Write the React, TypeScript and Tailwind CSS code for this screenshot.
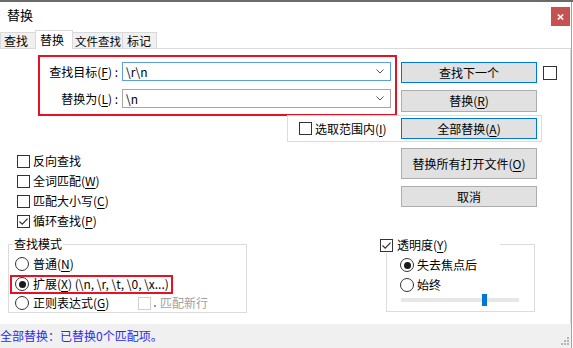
import React from "react";

const U = ({ c }: { c: string }) => (
  <span className="underline underline-offset-[2px] decoration-1">{c}</span>
);

function Check({ checked = false, disabled = false, big = false }: { checked?: boolean; disabled?: boolean; big?: boolean }) {
  return (
    <span
      className={`inline-flex items-center justify-center shrink-0 border bg-white ${big ? "w-[14px] h-[14px]" : "w-[13px] h-[13px]"} ${disabled ? "border-[#cfcfcf]" : "border-[#333333]"}`}
    >
      {checked && (
        <svg width="11" height="11" viewBox="0 0 11 11">
          <path d="M1.5 5.5 L4.2 8.2 L9.6 2.6" fill="none" stroke="#2a2a2a" strokeWidth="1.1" />
        </svg>
      )}
    </span>
  );
}

function Radio({ checked = false }: { checked?: boolean }) {
  return (
    <span className="inline-flex items-center justify-center w-[14px] h-[14px] shrink-0 rounded-full border border-[#333333] bg-white">
      {checked && <span className="w-[7px] h-[7px] rounded-full bg-[#1a1a1a]" />}
    </span>
  );
}

function Chevron() {
  return (
    <svg width="8" height="5" viewBox="0 0 8 5" className="shrink-0">
      <path d="M0.5 0.5 L4 4 L7.5 0.5" fill="none" stroke="#555" strokeWidth="1" />
    </svg>
  );
}

function Btn({ children, focus = false, tall = false, mid = false }: { children: React.ReactNode; focus?: boolean; tall?: boolean; mid?: boolean }) {
  return (
    <div
      className={`w-[136px] flex items-center justify-center whitespace-nowrap bg-[#e1e1e1] border ${tall ? "h-[31px]" : mid ? "h-[22px]" : "h-[21px]"} ${focus ? "border-[#0078d7]" : "border-[#adadad]"}`}
    >
      {children}
    </div>
  );
}

export default function App() {
  return (
    <div className="w-[573px] h-[348px] bg-white flex flex-col overflow-hidden text-black text-[12px] leading-[16px] [font-family:'Noto_Sans_CJK_SC','Microsoft_YaHei',sans-serif]">
      <div className="h-[2px] shrink-0 bg-[#6b6b6b]" />
      <div className="flex flex-1 min-h-0">
        <div className="w-[571px] flex flex-col">
          {/* title */}
          <div className="h-[28px] shrink-0 flex items-start justify-between">
            <span className="pl-[7px] pt-[5px] text-[13px] leading-[16px]">替换</span>
            <div className="mt-[5px] mr-[1px] w-[19px] h-[19px] bg-[#c75050] flex items-center justify-center">
              <svg width="7" height="6" viewBox="0 0 7 6">
                <path d="M0.8 0.5 L6.2 5.5 M6.2 0.5 L0.8 5.5" stroke="#fff" strokeWidth="1.6" />
              </svg>
            </div>
          </div>
          {/* tabs */}
          <div className="h-[18px] shrink-0 flex items-end relative z-10 whitespace-nowrap">
            <div className="w-[35px] h-[16px] shrink-0 pl-[3px] bg-[#f0f0f0] border-l border-t border-[#d9d9d9]">查找</div>
            <div className="w-[38px] h-[19px] shrink-0 -mb-px pl-[4px] pt-[1px] bg-white border-l border-t border-r border-[#d9d9d9]">替换</div>
            <div className="w-[49px] h-[16px] shrink-0 pl-[2px] text-[11.5px] bg-[#f0f0f0] border-t border-[#d9d9d9] overflow-hidden">文件查找</div>
            <div className="w-[35px] h-[16px] shrink-0 pl-[4px] bg-[#f0f0f0] border-l border-t border-r border-[#d9d9d9]">标记</div>
          </div>
          {/* panel */}
          <div className="flex-1 border-t border-r border-[#d9d9d9] flex flex-col">
            {/* row 1 */}
            <div className="flex items-start">
              <div className="ml-[38px] mt-[6px] w-[359px] shrink-0 border-2 border-[#e81123] pt-[5px] pb-[6px] flex flex-col gap-[8px]">
                <div className="flex items-center">
                  <div className="w-[80px] shrink-0 pr-[2px] flex justify-end">
                    <span className="whitespace-nowrap shrink-0">
                      查找目标(<U c="F" />) :
                    </span>
                  </div>
                  <div className="ml-[2px] w-[269px] shrink-0 h-[19px] border border-[#5b9fdb] flex items-center justify-between pl-[3px] pr-[6px]">
                    <span>\r\n</span>
                    <Chevron />
                  </div>
                </div>
                <div className="flex items-center">
                  <div className="w-[80px] shrink-0 pr-[2px] flex justify-end">
                    <span className="whitespace-nowrap shrink-0">
                      替换为(<U c="L" />) :
                    </span>
                  </div>
                  <div className="ml-[2px] w-[269px] shrink-0 h-[19px] border border-[#a5a5a5] flex items-center justify-between pl-[3px] pr-[6px]">
                    <span>\n</span>
                    <Chevron />
                  </div>
                </div>
              </div>
              <div className="ml-[4px] mt-[13px] flex flex-col gap-[7px]">
                <Btn focus>查找下一个</Btn>
                <Btn mid>
                  替换(<U c="R" />)
                </Btn>
              </div>
              <div className="ml-[6px] mt-[17px]">
                <Check big />
              </div>
            </div>
            {/* row 2 */}
            <div className="-mt-px ml-[287px] w-[255px] h-[27px] border border-[#dcdcdc] flex items-center pl-[11px] pr-[4px]">
              <Check />
              <span className="ml-[3px] whitespace-nowrap">
                选取范围内(<U c="I" />)
              </span>
              <div className="ml-auto">
                <Btn focus>
                  全部替换(<U c="A" />)
                </Btn>
              </div>
            </div>
            {/* row 3 */}
            <div className="mt-[6px] flex items-start">
              <div className="ml-[17px] pt-[3px] flex flex-col whitespace-nowrap">
                <div className="h-[20px] flex items-center gap-[3px]">
                  <Check />
                  <span>反向查找</span>
                </div>
                <div className="h-[20px] flex items-center gap-[3px]">
                  <Check />
                  <span>
                    全词匹配(<U c="W" />)
                  </span>
                </div>
                <div className="h-[20px] flex items-center gap-[3px]">
                  <Check />
                  <span>
                    匹配大小写(<U c="C" />)
                  </span>
                </div>
                <div className="h-[20px] flex items-center gap-[3px]">
                  <Check checked />
                  <span>
                    循环查找(<U c="P" />)
                  </span>
                </div>
              </div>
              <div className="ml-auto mr-[33px] flex flex-col gap-[7px]">
                <Btn tall>
                  替换所有打开文件(<U c="O" />)
                </Btn>
                <Btn>取消</Btn>
              </div>
            </div>
            {/* row 4 */}
            <div className="mt-[5px] flex items-start whitespace-nowrap">
              <div className="ml-[8px] w-[239px] shrink-0 flex flex-col">
                <span className="relative z-10 self-start ml-[5px] px-[1px] h-[16px] bg-white">查找模式</span>
                <div className="-mt-[8px] border border-[#dcdcdc] pt-[9px] flex flex-col">
                  <div className="h-[20px] flex items-center pl-[6px] gap-[4px]">
                    <Radio />
                    <span>
                      普通(<U c="N" />)
                    </span>
                  </div>
                  <div className="h-[20px] flex items-center">
                    <div className="ml-px w-[163px] h-[19px] border-2 border-[#e81123] flex items-center pl-[3px] gap-[4px]">
                      <Radio checked />
                      <span>
                        扩展(<U c="X" />) (\n, \r, \t, \0, \x...)
                      </span>
                    </div>
                  </div>
                  <div className="h-[18px] flex items-center pl-[6px]">
                    <div className="w-[123px] shrink-0 flex items-center gap-[4px]">
                      <Radio />
                      <span>
                        正则表达式(<U c="G" />)
                      </span>
                    </div>
                    <Check disabled />
                    <span className="ml-[3px] mt-[6px] w-[2px] h-[2px] bg-[#9a9a9a]" />
                    <span className="ml-[4px] text-[#a0a0a0]">匹配新行</span>
                  </div>
                </div>
              </div>
              <div className="ml-[133px] mt-[1px] w-[155px] shrink-0 flex flex-col">
                <div className="relative z-10 self-start w-[120px] h-[16px] bg-white flex items-center gap-[4px]">
                  <Check checked />
                  <span>
                    透明度(<U c="Y" />)
                  </span>
                </div>
                <div className="-mt-[9px] ml-[6px] w-[149px] border border-[#dcdcdc] pt-[10px] pb-[5px] flex flex-col">
                  <div className="h-[20px] flex items-center pl-[13px] gap-[3px]">
                    <Radio checked />
                    <span>失去焦点后</span>
                  </div>
                  <div className="h-[19px] flex items-center pl-[13px] gap-[3px]">
                    <Radio />
                    <span>始终</span>
                  </div>
                  <div className="relative ml-[14px] w-[118px] h-[12px] flex items-center">
                    <div className="w-full h-[4px] bg-[#e7e7e7]" />
                    <div className="absolute left-[81px] top-0 w-[5px] h-[12px] bg-[#0078d7]" />
                  </div>
                </div>
              </div>
            </div>
          </div>
          {/* status bar */}
          <div className="h-[24px] shrink-0 bg-[#f0f0f0] flex items-center justify-between">
            <span className="text-[#2b2bf0] whitespace-nowrap">全部替换：已替换0个匹配项。</span>
            <svg width="10" height="10" viewBox="0 0 10 10" className="mr-[1px] mt-[10px]">
              <rect x="7" y="1" width="2" height="2" fill="#b5b5b5" />
              <rect x="4" y="4" width="2" height="2" fill="#b5b5b5" />
              <rect x="7" y="4" width="2" height="2" fill="#b5b5b5" />
              <rect x="1" y="7" width="2" height="2" fill="#b5b5b5" />
              <rect x="4" y="7" width="2" height="2" fill="#b5b5b5" />
              <rect x="7" y="7" width="2" height="2" fill="#b5b5b5" />
            </svg>
          </div>
        </div>
        <div className="w-px bg-[#a3a3a3]" />
        <div className="w-px bg-white" />
      </div>
    </div>
  );
}
